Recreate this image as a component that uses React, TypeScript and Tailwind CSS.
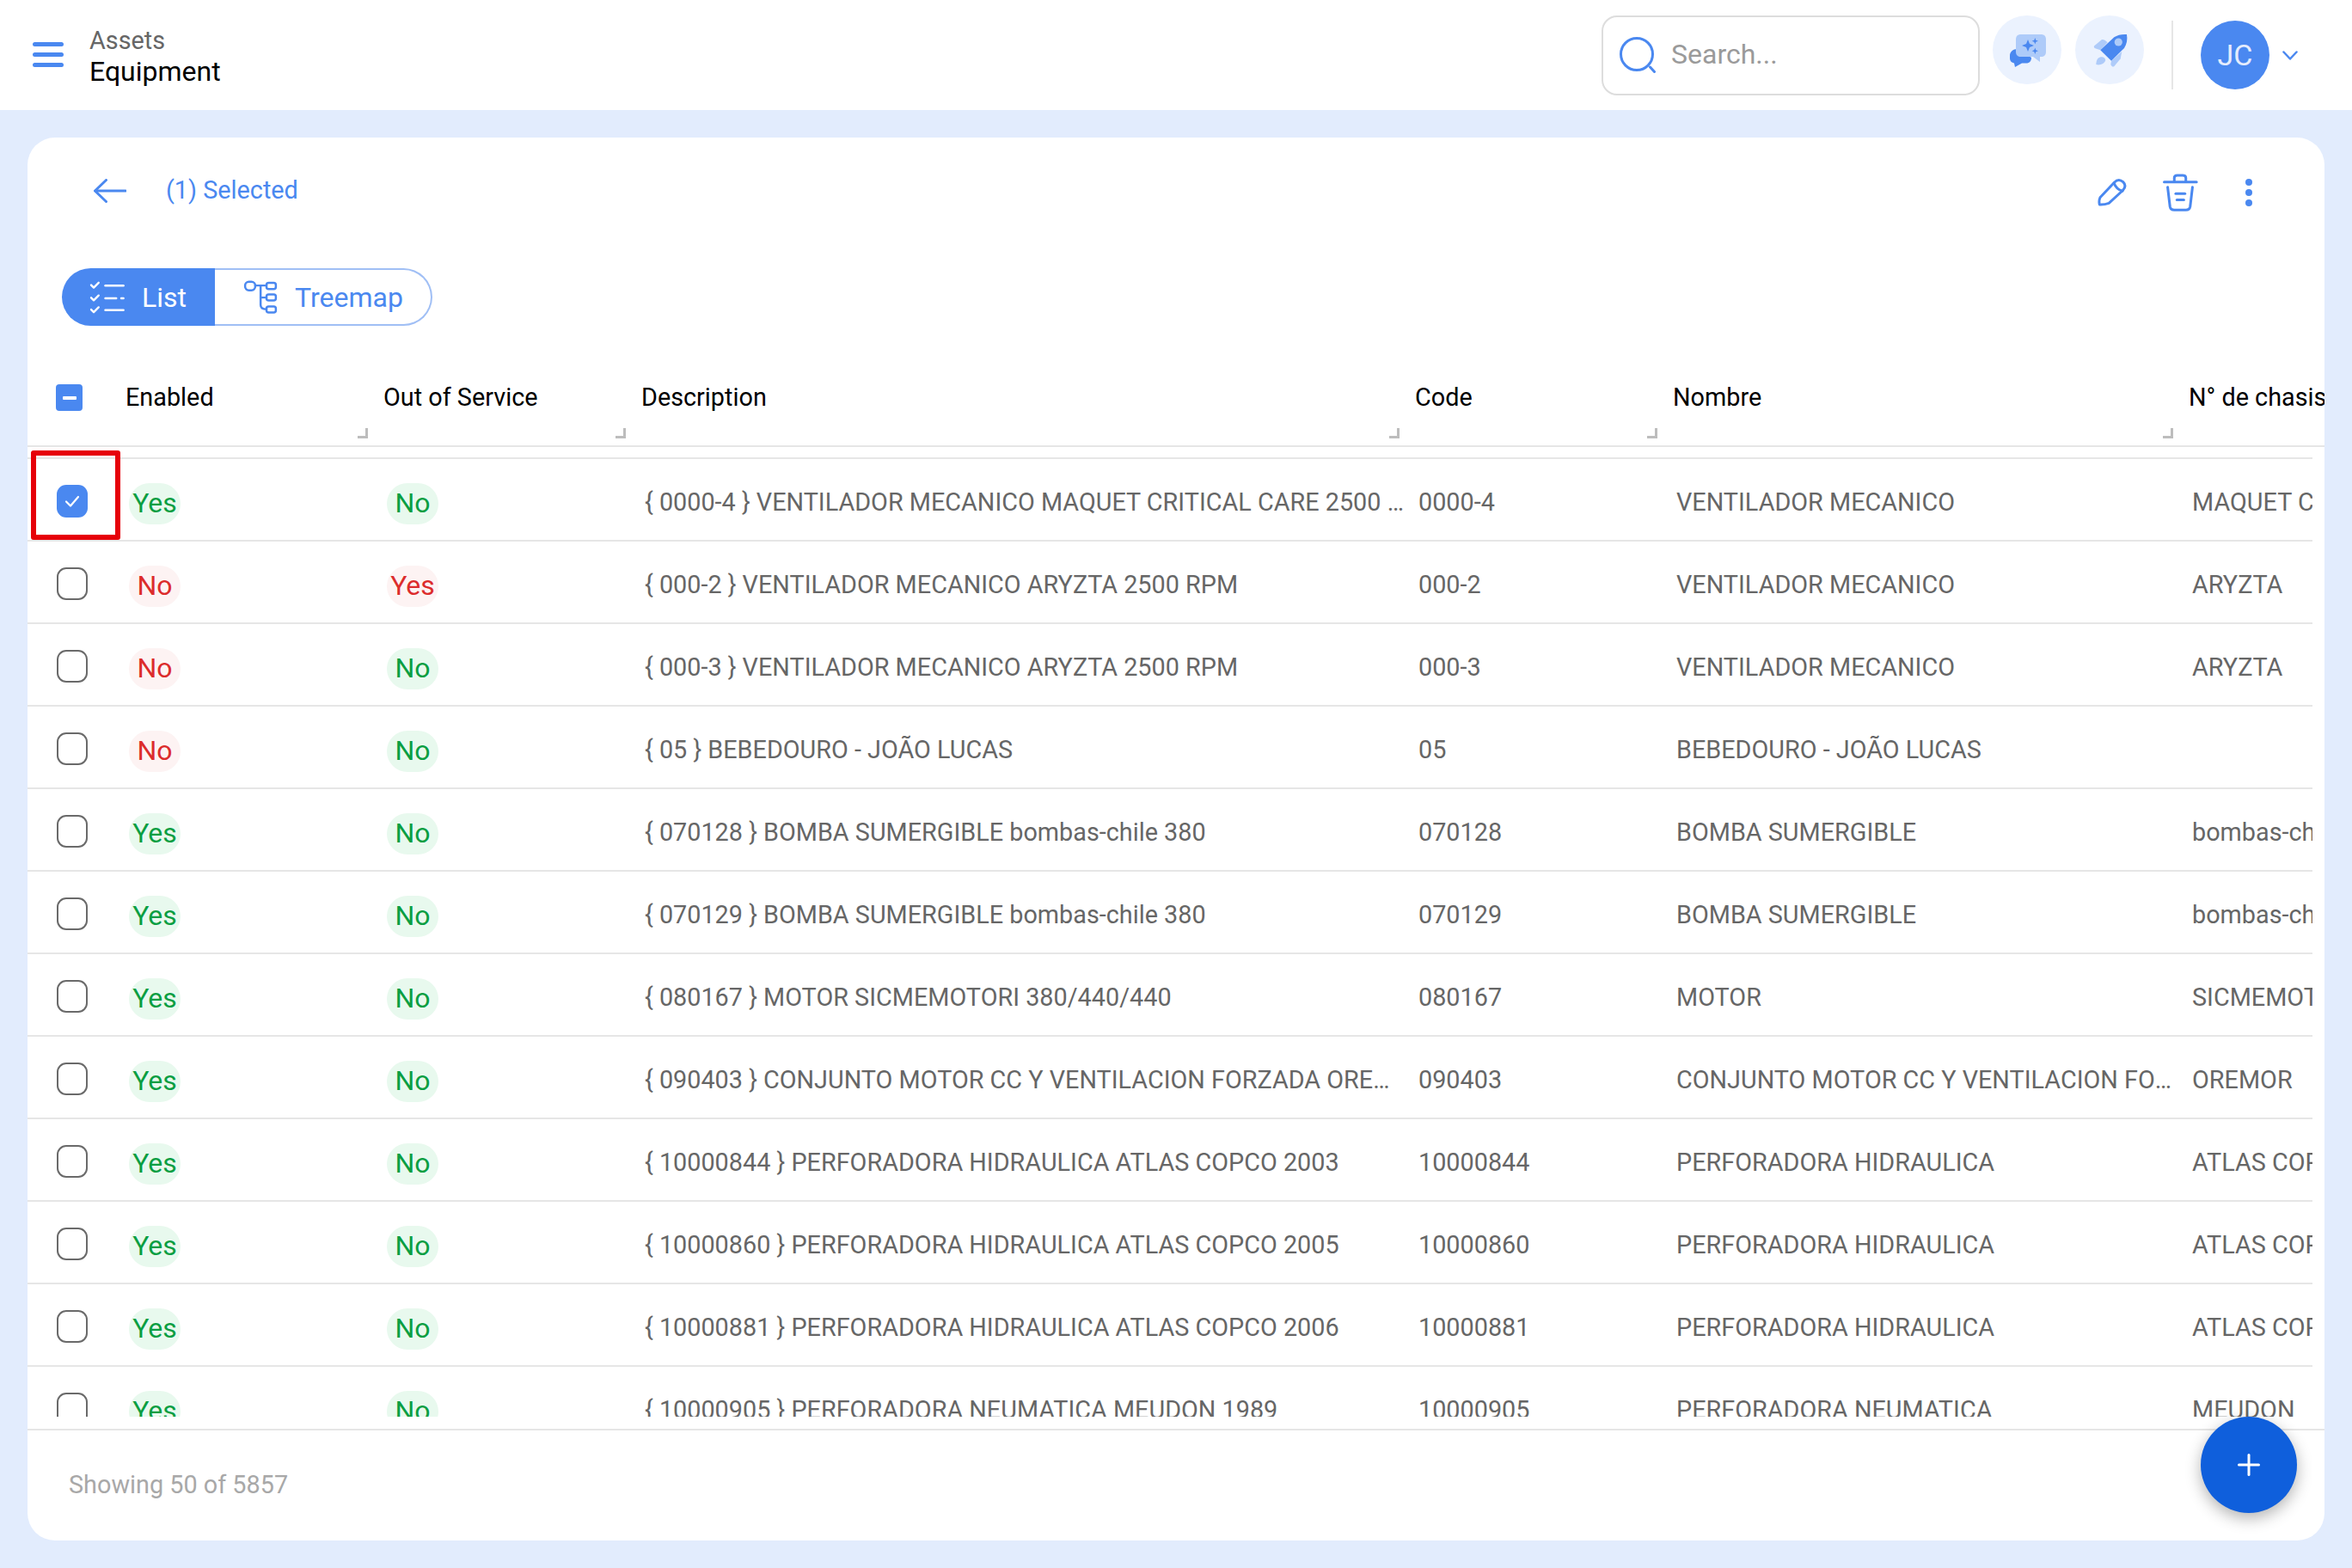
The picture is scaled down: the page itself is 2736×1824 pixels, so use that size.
import React from "react";

type Row = { on: boolean; out: boolean; desc: string; code: string; name: string; chassis: string };

const rows: Row[] = [
  { on: true, out: false, desc: "{ 0000-4 } VENTILADOR MECANICO MAQUET CRITICAL CARE 2500 RPM", code: "0000-4", name: "VENTILADOR MECANICO", chassis: "MAQUET CRITICAL" },
  { on: false, out: true, desc: "{ 000-2 } VENTILADOR MECANICO ARYZTA 2500 RPM", code: "000-2", name: "VENTILADOR MECANICO", chassis: "ARYZTA" },
  { on: false, out: false, desc: "{ 000-3 } VENTILADOR MECANICO ARYZTA 2500 RPM", code: "000-3", name: "VENTILADOR MECANICO", chassis: "ARYZTA" },
  { on: false, out: false, desc: "{ 05 } BEBEDOURO - JOÃO LUCAS", code: "05", name: "BEBEDOURO - JOÃO LUCAS", chassis: "" },
  { on: true, out: false, desc: "{ 070128 } BOMBA SUMERGIBLE bombas-chile 380", code: "070128", name: "BOMBA SUMERGIBLE", chassis: "bombas-chile" },
  { on: true, out: false, desc: "{ 070129 } BOMBA SUMERGIBLE bombas-chile 380", code: "070129", name: "BOMBA SUMERGIBLE", chassis: "bombas-chile" },
  { on: true, out: false, desc: "{ 080167 } MOTOR SICMEMOTORI 380/440/440", code: "080167", name: "MOTOR", chassis: "SICMEMOTORI" },
  { on: true, out: false, desc: "{ 090403 } CONJUNTO MOTOR CC Y VENTILACION FORZADA OREMOR 2200", code: "090403", name: "CONJUNTO MOTOR CC Y VENTILACION FORZADA", chassis: "OREMOR" },
  { on: true, out: false, desc: "{ 10000844 } PERFORADORA HIDRAULICA ATLAS COPCO 2003", code: "10000844", name: "PERFORADORA HIDRAULICA", chassis: "ATLAS COPCO" },
  { on: true, out: false, desc: "{ 10000860 } PERFORADORA HIDRAULICA ATLAS COPCO 2005", code: "10000860", name: "PERFORADORA HIDRAULICA", chassis: "ATLAS COPCO" },
  { on: true, out: false, desc: "{ 10000881 } PERFORADORA HIDRAULICA ATLAS COPCO 2006", code: "10000881", name: "PERFORADORA HIDRAULICA", chassis: "ATLAS COPCO" },
  { on: true, out: false, desc: "{ 10000905 } PERFORADORA NEUMATICA MEUDON 1989", code: "10000905", name: "PERFORADORA NEUMATICA", chassis: "MEUDON" },
];

function Badge({ label, good }: { label: string; good: boolean }) {
  return (
    <div className="w-[300px] shrink-0 pl-[4px]">
      <span
        className={
          "mt-[6px] flex h-[48px] w-[60px] items-center justify-center rounded-[24px] text-[32px] " +
          (good ? "bg-[#e8f9ee] text-[#0a9e42]" : "bg-[#fdf3f3] text-[#dc2c2c]")
        }
      >
        <span className="-mt-[2px]">{label}</span>
      </span>
    </div>
  );
}

function Handle() {
  return <span className="absolute bottom-[8px] right-[18px] h-[12px] w-[12px] border-b-[3px] border-r-[3px] border-[#bdbdbd]" />;
}

function HeaderCell({ w, label, handle = true }: { w: string; label: string; handle?: boolean }) {
  return (
    <div className={"relative h-full shrink-0 pt-[66px] text-[28.8px] leading-[34px] whitespace-nowrap text-black " + w}>
      {label}
      {handle && <Handle />}
    </div>
  );
}

function TableRow({ r, index }: { r: Row; index: number }) {
  const selected = index === 0;
  return (
    <div className="flex h-[96px] shrink-0 items-center border-b-2 border-[#e6e6e6] pt-[4px] text-[28.8px] text-[#666666]">
      <div className="flex w-[114px] shrink-0 pl-[34px]">
        {selected ? (
          <span className="flex h-[38px] w-[36px] items-center justify-center rounded-[11px] bg-[#4a88f0]">
            <svg width="20" height="20" viewBox="0 0 20 20" fill="none" stroke="#fff" strokeWidth="2.2" strokeLinecap="round" strokeLinejoin="round">
              <path d="M3 10.5 L8 15.5 L17 5" />
            </svg>
          </span>
        ) : (
          <span className="h-[38px] w-[36px] rounded-[11px] border-2 border-[#6a6a6a]" />
        )}
      </div>
      <Badge label={r.on ? "Yes" : "No"} good={r.on} />
      <Badge label={r.out ? "Yes" : "No"} good={!r.out} />
      <div className="w-[900px] shrink-0 truncate pl-[4px] pr-[7px] pt-[4px]">{r.desc}</div>
      <div className="w-[300px] shrink-0 truncate pl-[4px] pt-[4px]">{r.code}</div>
      <div className="w-[600px] shrink-0 truncate pl-[4px] pr-[18px] pt-[4px]">{r.name}</div>
      <div className="w-[144px] shrink-0 overflow-hidden pl-[4px] pt-[4px] whitespace-nowrap">{r.chassis}</div>
    </div>
  );
}

export default function App() {
  return (
    <div className="flex h-screen w-full flex-col overflow-hidden bg-[#e2ecfd] font-[Roboto,sans-serif]">
      {/* Top bar */}
      <header className="flex h-[128px] shrink-0 items-center bg-white pl-[38px] pr-[63px]">
        <svg width="36" height="30" viewBox="0 0 36 30" fill="#4a88f0">
          <rect x="0" y="0" width="36" height="5" rx="2.5" />
          <rect x="0" y="12" width="36" height="5" rx="2.5" />
          <rect x="0" y="24" width="36" height="5" rx="2.5" />
        </svg>
        <div className="ml-[30px] flex flex-col pt-[2px]">
          <span className="text-[28.8px] leading-[36px] text-[#666666]">Assets</span>
          <span className="text-[32px] leading-[36px] text-black">Equipment</span>
        </div>
        <div className="ml-auto flex items-center">
          <div className="flex h-[93px] w-[440px] items-center rounded-[18px] border-2 border-[#dddddd] pl-[19px]">
            <svg width="42" height="42" viewBox="0 0 42 42" fill="none" stroke="#4a88f0" strokeLinecap="round">
              <circle cx="20" cy="20" r="18.5" strokeWidth="3" />
              <path d="M35.5 35 L40.5 40.5" strokeWidth="3" />
            </svg>
            <span className="mb-[2px] ml-[18px] text-[32px] text-[#9a9a9a]">Search...</span>
          </div>
          <button className="ml-[15px] mb-[13px] flex h-[80px] w-[80px] rounded-full bg-[#ebf2fe]">
            <svg width="80" height="80" viewBox="0 0 80 80">
              <path d="M30 39 C24 38.5 20 42 20 47 V50 C20 53 22 55 25 55.5 L26 60 L34 55.5 H39 C43 55.5 45 53 45 49 Z" fill="#4a88f0" />
              <path d="M33 22 H56 C60 22 62 24 62 28 V42 C62 46 60 48 56 48 H55 V54 L47 48 H33 C29 48 27 46 27 42 V28 C27 24 29 22 33 22 Z" fill="#aecbf9" />
              <path d="M41 28 L43 33 L48 35 L43 37 L41 42 L39 37 L34 35 L39 33 Z" fill="#4a88f0" />
              <path d="M49.3 26 L50.3 28.7 L53 29.7 L50.3 30.7 L49.3 33.4 L48.3 30.7 L45.6 29.7 L48.3 28.7 Z" fill="#4a88f0" />
              <path d="M49.3 37.6 L50.3 40.3 L53 41.3 L50.3 42.3 L49.3 45 L48.3 42.3 L45.6 41.3 L48.3 40.3 Z" fill="#4a88f0" />
            </svg>
          </button>
          <button className="ml-[16px] mb-[13px] flex h-[80px] w-[80px] rounded-full bg-[#ebf2fe]">
            <svg width="80" height="80" viewBox="0 0 80 80">
              <path d="M22 35.5 L31 28 C33 27.5 36 29.5 37.7 31.3 L29.3 40.3 L24 38.5 C22 38 21.5 36.5 22 35.5 Z" fill="#aecbf9" />
              <path d="M42 52.7 L54.3 42 L52.7 50.3 L45.5 59 C44 60.5 42 59 41.3 57 Z" fill="#aecbf9" />
              <path d="M24.3 57 C24.5 52 26 49.5 29 48.5 C32 47.5 35 49 35.3 52 C34 56 29 58.5 24.3 57 Z" fill="#aecbf9" />
              <path d="M60 22 C61 28 60 33 57 38 L42 52.7 L29.3 40.3 L45.3 25.3 C49 22.5 55 21.5 60 22 Z" fill="#4a88f0" />
              <circle cx="50.3" cy="31" r="4.6" fill="#aecbf9" />
            </svg>
          </button>
          <div className="ml-[32px] h-[80px] w-[2px] bg-[#e6e6e6]" />
          <div className="ml-[32px] flex h-[80px] w-[80px] items-center justify-center rounded-full bg-[#4a88f0] text-[34px] text-[#e4ecfd]">JC</div>
          <svg className="ml-[15px]" width="18" height="11" viewBox="0 0 18 11" fill="none" stroke="#4a88f0" strokeWidth="2.5" strokeLinecap="round" strokeLinejoin="round">
            <path d="M1.5 1.5 L9 9.5 L16.5 1.5" />
          </svg>
        </div>
      </header>

      {/* Content */}
      <main className="min-h-0 flex-1 p-[32px]">
        <div className="relative flex h-full flex-col overflow-hidden rounded-[32px] bg-white">
          {/* Selection toolbar */}
          <div className="flex h-[124px] shrink-0 items-center pl-[77px] pr-[84px]">
            <svg width="38" height="28" viewBox="0 0 38 28" fill="none" stroke="#4a88f0" strokeWidth="3" strokeLinecap="round" strokeLinejoin="round">
              <path d="M37 14 H2" />
              <path d="M14.5 1.5 L1.5 14 L14.5 26.5" />
            </svg>
            <span className="ml-[46px] text-[28.8px] text-[#4a88f0]">(1) Selected</span>
            <div className="ml-auto flex items-center pt-[3px]">
              <svg width="38" height="38" viewBox="20 30 115 115" fill="none" stroke="#4a88f0" strokeWidth="9" strokeLinecap="round" strokeLinejoin="round">
                <path d="M35 105 L85 52 Q100 36 116 50 Q130 64 115 80 L66 125 Q50 131 33 130 Q30 116 35 105 Z" />
                <path d="M84 54 Q92 76 114 82" />
              </svg>
              <svg className="ml-[38px]" width="44" height="47" viewBox="250 15 130 140" fill="none" stroke="#4a88f0" strokeWidth="9" strokeLinecap="round" strokeLinejoin="round">
                <path d="M260 50 H372" />
                <path d="M295 46 V36 Q295 27 305 27 H325 Q335 27 335 36 V46" />
                <path d="M272 68 L280 135 Q282 147 295 147 H335 Q348 147 350 135 L358 68" />
                <path d="M300 90 H332" />
                <path d="M304 112 H328" />
              </svg>
              <div className="ml-[54px] flex w-[8px] flex-col gap-[4px]">
                <span className="h-[8px] w-[8px] rounded-full bg-[#4a88f0]" />
                <span className="h-[8px] w-[8px] rounded-full bg-[#4a88f0]" />
                <span className="h-[8px] w-[8px] rounded-full bg-[#4a88f0]" />
              </div>
            </div>
          </div>

          {/* View switch */}
          <div className="shrink-0 pl-[40px] pt-[28px]">
            <div className="flex h-[67px] w-fit text-[32px]">
              <div className="flex h-full items-center rounded-l-[34px] bg-[#4a88f0] pl-[32px] pr-[33px] text-white">
                <svg width="42" height="40" viewBox="40 35 125 118" fill="none" stroke="#fff" strokeWidth="7" strokeLinecap="round" strokeLinejoin="round">
                  <path d="M46 51 L55 60 L72 43" />
                  <path d="M46 95 L55 104 L72 87" />
                  <path d="M46 136 L55 145 L72 128" />
                  <path d="M95 53 H158" />
                  <path d="M95 97 H133" />
                  <path d="M150 97 H158" />
                  <path d="M95 138 H158" />
                </svg>
                <span className="ml-[19px]">List</span>
              </div>
              <div className="flex h-full items-center rounded-r-[34px] border-2 border-l-0 border-[#a0bff5] pl-[32px] pr-[32px] text-[#4a88f0]">
                <svg width="42" height="41" viewBox="570 30 135 130" fill="none" stroke="#4a88f0" strokeWidth="8" strokeLinecap="round" strokeLinejoin="round">
                  <rect x="580" y="38" width="38" height="32" rx="14" />
                  <rect x="660" y="42" width="35" height="23" rx="8" />
                  <rect x="660" y="85" width="35" height="23" rx="8" />
                  <rect x="660" y="130" width="35" height="23" rx="8" />
                  <path d="M618 52 H660" />
                  <path d="M638 52 V125 Q638 141 660 141" />
                  <path d="M638 97 H660" />
                </svg>
                <span className="ml-[19px]">Treemap</span>
              </div>
            </div>
          </div>

          {/* Table */}
          <div className="relative flex min-h-0 flex-1 flex-col">
            <div className="flex h-[141px] shrink-0 border-b-2 border-[#e6e6e6]">
              <div className="w-[114px] shrink-0 pl-[33px] pt-[68px]">
                <span className="flex h-[31px] w-[31px] items-center justify-center rounded-[4px] bg-[#4a88f0]">
                  <span className="h-[4px] w-[16px] rounded-[1px] bg-white" />
                </span>
              </div>
              <HeaderCell w="w-[300px]" label="Enabled" />
              <HeaderCell w="w-[300px]" label="Out of Service" />
              <HeaderCell w="w-[900px]" label="Description" />
              <HeaderCell w="w-[300px]" label="Code" />
              <HeaderCell w="w-[600px]" label="Nombre" />
              <HeaderCell w="w-[158px]" label="N° de chasis" handle={false} />
            </div>
            <div className="mb-[14px] mr-[14px] mt-[12px] flex min-h-0 flex-1 flex-col overflow-hidden border-t-2 border-[#e6e6e6]">
              {rows.map((r, i) => (
                <TableRow key={r.code} r={r} index={i} />
              ))}
            </div>
            <div className="pointer-events-none absolute left-[4px] top-[145px] h-[104px] w-[104px] rounded-[3px] border-[6px] border-[#e60009]" />
          </div>

          {/* Footer */}
          <div className="flex h-[130px] shrink-0 items-center border-t-2 border-[#e6e6e6] pl-[48px] text-[28.8px] text-[#a8a8a8]">
            Showing 50 of 5857
          </div>
          <button className="absolute bottom-[32px] right-[32px] flex h-[112px] w-[112px] items-center justify-center rounded-full bg-[#0f5fdc] shadow-[0_6px_18px_rgba(0,0,0,0.3)]">
            <svg width="26" height="26" viewBox="0 0 26 26" stroke="#fff" strokeWidth="3" strokeLinecap="round">
              <path d="M13 1.5 V24.5" />
              <path d="M1.5 13 H24.5" />
            </svg>
          </button>
        </div>
      </main>
    </div>
  );
}
